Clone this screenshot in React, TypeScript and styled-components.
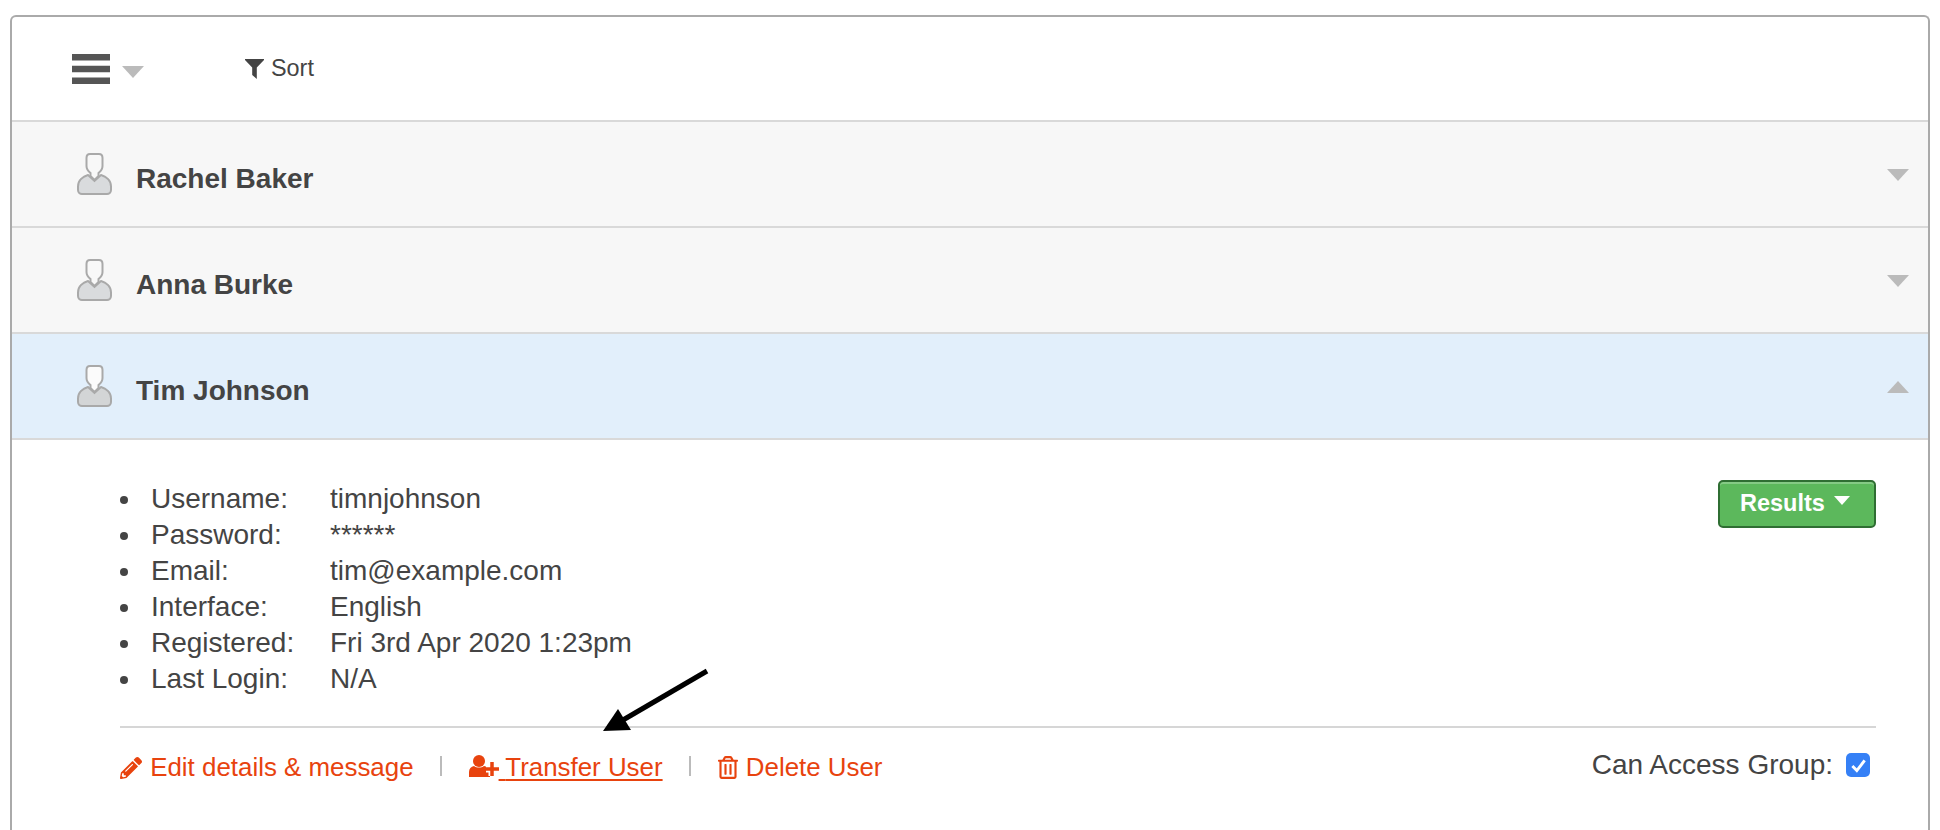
import React from "react";
import styled, { createGlobalStyle } from "styled-components";
import { FaPencilAlt, FaRegTrashAlt } from "react-icons/fa";

const GlobalStyle = createGlobalStyle`
  html, body {
    margin: 0;
    padding: 0;
    background: #fff;
    overflow: hidden;
  }
  body {
    font-family: "Liberation Sans", Arial, sans-serif;
    color: #444;
  }
`;

const Panel = styled.div`
  position: relative;
  box-sizing: border-box;
  margin: 15px 10px 0;
  min-height: 815px;
  border: 2px solid #aaa;
  border-bottom: none;
  border-radius: 6px 6px 0 0;
`;

const Toolbar = styled.div`
  box-sizing: border-box;
  height: 105px;
  display: flex;
  align-items: center;
  padding-left: 60px;
  border-bottom: 2px solid #d9d9d9;
`;

const MenuToggle = styled.div`
  display: flex;
  align-items: center;
  gap: 12px;
`;

const Bars = styled.svg`
  display: block;
  width: 38px;
  height: 30px;
  fill: #555;
`;

const Caret = styled.span<{ $up?: boolean; $w: number; $h: number; $color: string }>`
  display: block;
  width: 0;
  height: 0;
  border-left: ${(p) => p.$w / 2}px solid transparent;
  border-right: ${(p) => p.$w / 2}px solid transparent;
  ${(p) =>
    p.$up
      ? `border-bottom: ${p.$h}px solid ${p.$color};`
      : `border-top: ${p.$h}px solid ${p.$color};`}
`;

const ToggleCaret = styled(Caret)`
  margin-top: 7px;
`;

const SortButton = styled.div`
  display: flex;
  align-items: center;
  gap: 7px;
  margin-left: 101px;
  font-size: 23.4px;
  color: #444;
`;

const Funnel = styled.svg`
  display: block;
  width: 19px;
  height: 20px;
  fill: #444;
`;

const UserRow = styled.div<{ $active?: boolean }>`
  box-sizing: border-box;
  height: 106px;
  display: flex;
  align-items: center;
  padding: 10px 19px 0 65px;
  background: ${(p) => (p.$active ? "#e2effb" : "#f7f7f7")};
  border-bottom: 2px solid #d9d9d9;
`;

const Avatar = styled.svg`
  display: block;
  width: 35px;
  height: 42px;
  margin-top: -11px;
  flex: none;
`;

const UserName = styled.span`
  margin-left: 24px;
  font-size: 28px;
  font-weight: 700;
  color: #444;
`;

const RowCaret = styled.span`
  margin-left: auto;
  margin-top: -9px;
`;

const Details = styled.div`
  padding: 41px 52px 0 108px;
`;

const InfoBlock = styled.div`
  display: flex;
  justify-content: space-between;
  align-items: flex-start;
  padding-bottom: 29px;
  border-bottom: 2px solid #d6d6d6;
`;

const InfoList = styled.ul`
  margin: 0;
  padding: 0;
  list-style: none;
  font-size: 28px;
  line-height: 36px;
  color: #444;
`;

const InfoRow = styled.li`
  display: flex;
  align-items: center;

  &::before {
    content: "";
    width: 8px;
    height: 8px;
    margin: 2px 23px 0 0;
    border-radius: 50%;
    background: #444;
  }
`;

const InfoLabel = styled.span`
  width: 179px;
`;

const ResultsButton = styled.button`
  box-sizing: border-box;
  width: 158px;
  height: 48px;
  margin-top: -1px;
  display: flex;
  align-items: center;
  gap: 9px;
  padding: 0 0 2px 20px;
  border: 2px solid #2f6e33;
  border-radius: 5px;
  background: #5cb85c;
  box-shadow: inset 0 2px 0 rgba(255, 255, 255, 0.25);
  color: #fff;
  font-family: inherit;
  font-size: 23.5px;
  font-weight: 700;
`;

const ResultsCaret = styled(Caret)`
  margin-top: -5px;
`;

const Footer = styled.div`
  display: flex;
  justify-content: space-between;
  align-items: flex-start;
  padding-top: 24px;
`;

const Actions = styled.div`
  display: flex;
  align-items: center;
  gap: 26.5px;
  height: 30px;
`;

const ActionLink = styled.a<{ $underline?: boolean }>`
  font-size: 25.9px;
  line-height: 30px;
  color: #e8430e;
  white-space: pre;
  text-decoration: ${(p) => (p.$underline ? "underline" : "none")};
  text-decoration-thickness: 2px;
  text-underline-offset: 3px;

  svg {
    vertical-align: -3px;
  }
`;

const PencilIcon = styled(FaPencilAlt)`
  width: 22px;
  height: 22px;
  margin-right: 1px;
`;

const TrashIcon = styled(FaRegTrashAlt)`
  width: 20px;
  height: 23px;
  margin-right: 1px;
`;

const TransferIcon = styled.svg`
  width: 30px;
  height: 24px;
  fill: #e8430e;
`;

const Separator = styled.span`
  width: 2px;
  height: 20px;
  margin-top: -3px;
  background: #bbb;
`;

const AccessToggle = styled.label`
  display: flex;
  align-items: center;
  gap: 13px;
  padding-right: 6px;
  margin-top: -2px;
  font-size: 28px;
  line-height: 30px;
  color: #444;
`;

const CheckBox = styled.span`
  display: flex;
  align-items: center;
  justify-content: center;
  width: 24px;
  height: 24px;
  border-radius: 5px;
  background: #3580f6;

  svg {
    width: 19px;
    height: 19px;
    fill: none;
    stroke: #fff;
    stroke-width: 2.6;
  }
`;

const Annotation = styled.svg`
  position: absolute;
  left: 583px;
  top: 648px;
  width: 120px;
  height: 80px;
  pointer-events: none;
`;

const users = [
  { name: "Rachel Baker" },
  { name: "Anna Burke" },
  { name: "Tim Johnson", active: true },
];

const info = [
  ["Username:", "timnjohnson"],
  ["Password:", "******"],
  ["Email:", "tim@example.com"],
  ["Interface:", "English"],
  ["Registered:", "Fri 3rd Apr 2020 1:23pm"],
  ["Last Login:", "N/A"],
];

const PersonIcon = ({ active }: { active?: boolean }) => (
  <Avatar viewBox="0 0 35 42">
    <path
      d="M11 22L17.500 28L24 22c5 1.500 10 5.500 10 11.500v3.500c0 2.500-2 4-4 4H5c-2 0-4-1.500-4-4v-3.500c0-6 5-10 10-11.500z"
      fill={active ? "#d3d5d6" : "#d9dbdd"}
      stroke="#a9a9a9"
      strokeWidth="2"
    />
    <path
      d="M9.500 5c0-2.500 1.500-4 3.500-4h9c2 0 3.500 1.500 3.500 4v8c0 3-2 5.500-4 7v3l-4 4-4-4v-3c-2-1.500-4-4-4-7z"
      fill={active ? "#fbfbfb" : "#f8f8f8"}
      stroke="#a9a9a9"
      strokeWidth="2"
    />
  </Avatar>
);

export default function App() {
  return (
    <>
      <GlobalStyle />
      <Panel>
        <Toolbar>
          <MenuToggle>
            <Bars viewBox="0 0 38 30">
              <rect x="0" y="0" width="38" height="6.500" />
              <rect x="0" y="11.750" width="38" height="6.500" />
              <rect x="0" y="23.500" width="38" height="6.500" />
            </Bars>
            <ToggleCaret $w={22} $h={12} $color="#bbb" />
          </MenuToggle>
          <SortButton>
            <Funnel viewBox="0 0 19 20">
              <path d="M0 0h19v1L11.800 8.500V20L7.200 16V8.500L0 1z" />
            </Funnel>
            Sort
          </SortButton>
        </Toolbar>

        {users.map((u) => (
          <UserRow key={u.name} $active={u.active}>
            <PersonIcon active={u.active} />
            <UserName>{u.name}</UserName>
            <RowCaret>
              <Caret $up={u.active} $w={22} $h={12} $color="#bbb" />
            </RowCaret>
          </UserRow>
        ))}

        <Details>
          <InfoBlock>
            <InfoList>
              {info.map(([label, value]) => (
                <InfoRow key={label}>
                  <InfoLabel>{label}</InfoLabel>
                  {value}
                </InfoRow>
              ))}
            </InfoList>
            <ResultsButton>
              Results
              <ResultsCaret $w={16} $h={9} $color="#fff" />
            </ResultsButton>
          </InfoBlock>

          <Footer>
            <Actions>
              <ActionLink>
                <PencilIcon /> Edit details &amp; message
              </ActionLink>
              <Separator />
              <ActionLink $underline>
                <TransferIcon viewBox="0 0 30 24">
                  <circle cx="10" cy="6" r="6" />
                  <path d="M0 22v-5c0-3.500 2-5.500 5-6 1.500 1 3 1.500 5 1.500s3.500-.5 5-1.500c3 .5 6 2.500 6 6v5z" />
                  <path
                    d="M23 7v14M17 14h13"
                    fill="none"
                    stroke="#fff"
                    strokeWidth="7"
                  />
                  <path
                    d="M23 7v14M17 14h13"
                    fill="none"
                    stroke="#e8430e"
                    strokeWidth="3.500"
                  />
                </TransferIcon>{" "}
                Transfer User
              </ActionLink>
              <Separator />
              <ActionLink>
                <TrashIcon /> Delete User
              </ActionLink>
            </Actions>
            <AccessToggle>
              Can Access Group:
              <CheckBox>
                <svg viewBox="0 0 17 17">
                  <path d="M3 9l4 4 7-9" />
                </svg>
              </CheckBox>
            </AccessToggle>
          </Footer>
        </Details>

        <Annotation viewBox="0 0 120 80">
          <path d="M112 6L28 55" stroke="#000" strokeWidth="5" fill="none" />
          <polygon points="8,66 23,44 36,65" fill="#000" />
        </Annotation>
      </Panel>
    </>
  );
}
